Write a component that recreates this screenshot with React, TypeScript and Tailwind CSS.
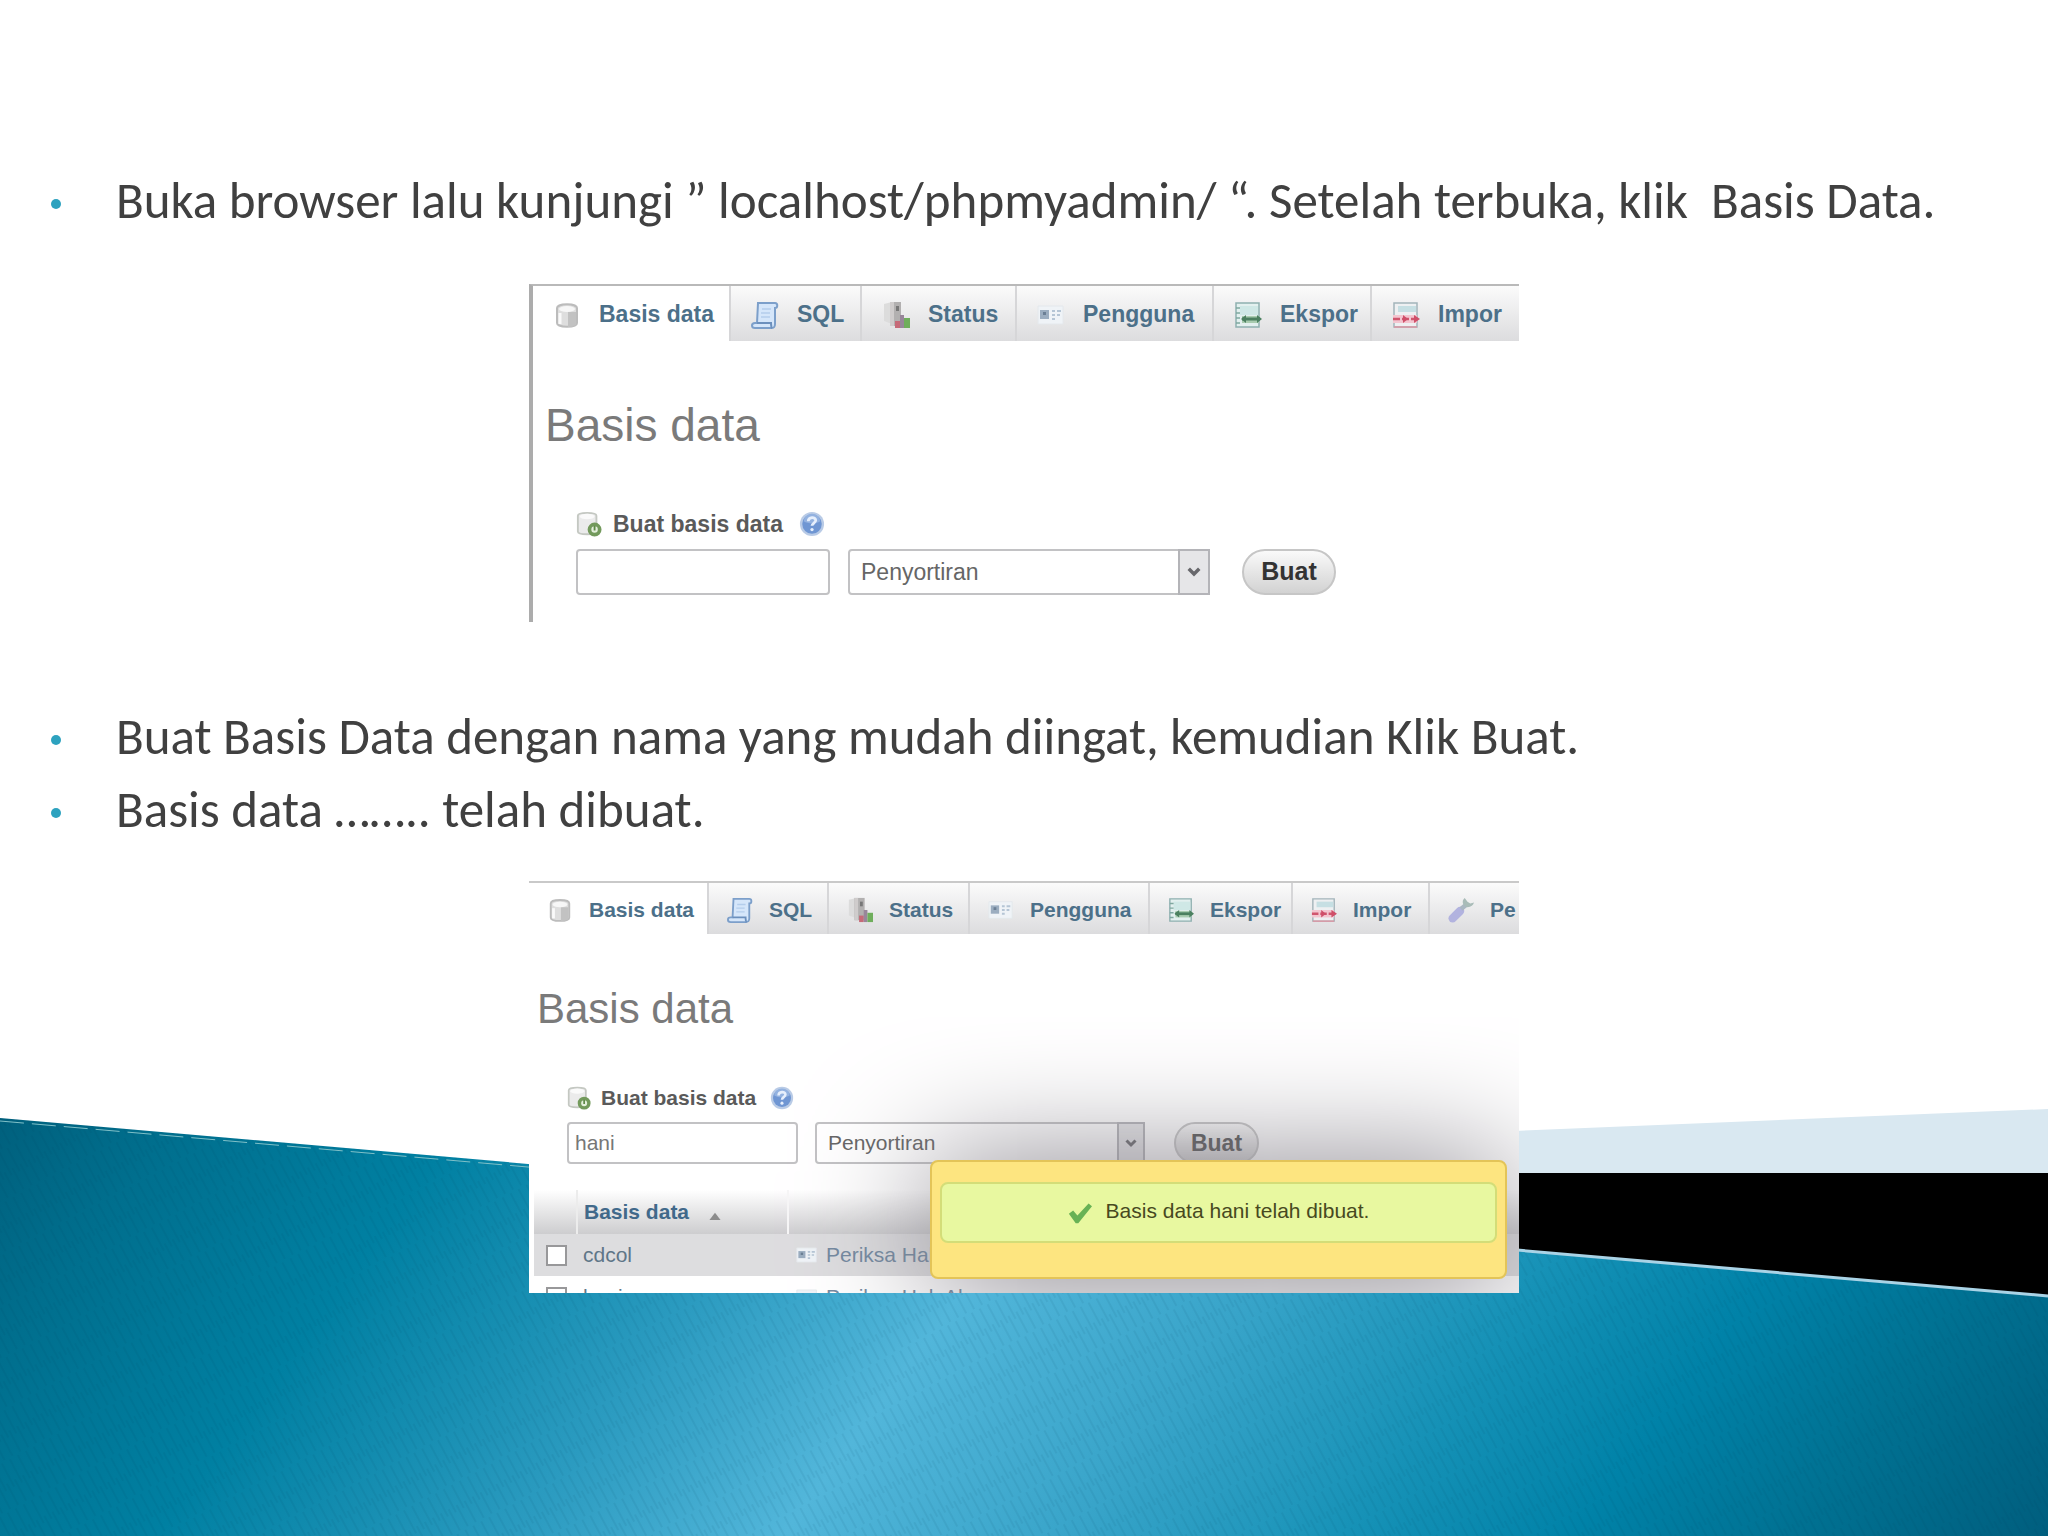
import React from "react";

type IconProps = { className?: string };

function DatabaseIcon({ className }: IconProps) {
  return (
    <svg viewBox="0 0 28 28" className={className} aria-hidden="true">
      <path d="M4 7c0-5 20-5 20 0v15c0 5-20 5-20 0z" fill="#dedede" stroke="#bcbcbc" strokeWidth="2" />
      <path d="M15 11h8v13c-2 1-5 2-8 2z" fill="#c2c2c2" />
      <ellipse cx="14" cy="8" rx="8" ry="3" fill="#f7f7f7" />
      <path d="M7 12v11" stroke="#fafafa" strokeWidth="3" />
    </svg>
  );
}

function SqlIcon({ className }: IconProps) {
  return (
    <svg viewBox="0 0 28 28" className={className} aria-hidden="true">
      <path
        d="M7 2h17c3 0 3 5 0 5v16c0 4-2 4-4 4H4c-4 0-4-5 0-5h2L7 2z"
        fill="#d5e6fa"
        stroke="#7c9fca"
        strokeWidth="2"
      />
      <path d="M6 22h14c0 3 1 5 0 5" fill="none" stroke="#6c90bd" strokeWidth="2" />
      <path d="M11 8h9M10 12h9M10 16h9" stroke="#b4cdec" strokeWidth="1.5" />
    </svg>
  );
}

function StatusIcon({ className }: IconProps) {
  return (
    <svg viewBox="0 0 28 28" className={className} aria-hidden="true">
      <path d="M2 3l8-2v22l-8-3z" fill="#dcdcdc" />
      <path d="M8 1h11v24H8z" fill="#b2b0b0" />
      <path d="M8 1h4v24H8z" fill="#cfcccc" />
      <path d="M14 5h3v5h-3z" fill="#777" />
      <path d="M13 20h5v7h-5z" fill="#c66a78" />
      <path d="M18 14h4v13h-4z" fill="#98869a" />
      <path d="M22 17h6v10h-6z" fill="#6fae5c" />
    </svg>
  );
}

function UsersIcon({ className }: IconProps) {
  return (
    <svg viewBox="0 0 28 28" className={className} aria-hidden="true">
      <path d="M1 5h25v18H1z" fill="#eff3f7" stroke="#e4e8ec" />
      <path d="M3 9h9v9H3z" fill="#9badc0" />
      <path d="M6 11h3v3H6z" fill="#6b7f95" />
      <path d="M15 10h3M20 10h4M15 14h3M20 14h3M15 18h3" stroke="#b5c5d5" strokeWidth="2" />
    </svg>
  );
}

function ExportIcon({ className }: IconProps) {
  return (
    <svg viewBox="0 0 28 28" className={className} aria-hidden="true">
      <path d="M2 2h23v24H2z" fill="#e3f0ef" stroke="#8fb0b0" strokeWidth="1.5" />
      <path d="M6 5h18v9H6z" fill="#cfe8e6" />
      <path d="M2 7h4M2 12h4M2 17h4M2 22h4" stroke="#7fa8a0" strokeWidth="1.5" />
      <path d="M8 15h17v7H8z" fill="#a9ccb0" />
      <path d="M8 18h18" stroke="#4b8060" strokeWidth="3" />
      <path d="M12 14l-5 4 5 4zM23 14l5 4-5 4z" fill="#4b8060" />
    </svg>
  );
}

function ImportIcon({ className }: IconProps) {
  return (
    <svg viewBox="0 0 28 28" className={className} aria-hidden="true">
      <path d="M2 2h23v24H2z" fill="#eef0f2" stroke="#a3b4ba" strokeWidth="1.5" />
      <path d="M6 5h18v6H6z" fill="#c6dfe3" />
      <path d="M1 14h24v8H1z" fill="#f3c6d0" />
      <path d="M1 18h26" stroke="#d0566e" strokeWidth="2.5" strokeDasharray="7 2" />
      <path d="M11 14l5 4-5 4zM22 14l6 4-6 4z" fill="#cf4f69" />
      <path d="M2 26h23" stroke="#dc94a2" strokeWidth="1.5" />
    </svg>
  );
}

function SettingsIcon({ className }: IconProps) {
  return (
    <svg viewBox="0 0 28 28" className={className} aria-hidden="true">
      <path d="M5 23L13 15" stroke="#b2b3df" strokeWidth="9" strokeLinecap="round" />
      <path d="M14 13l6-5" stroke="#aab7c2" strokeWidth="5" />
      <path d="M18 1c-4 3-2 9 3 10 4 0 6-2 7-5l-4 1-3-2z" fill="#a9bcb8" />
    </svg>
  );
}

function NewDatabaseIcon({ className }: IconProps) {
  return (
    <svg viewBox="0 0 28 28" className={className} aria-hidden="true">
      <path d="M2 5c0-4 20-4 20 0v17c0 4-20 4-20 0z" fill="#ebebeb" stroke="#c4c8c2" strokeWidth="2" />
      <ellipse cx="12" cy="6" rx="8" ry="3" fill="#fafafa" />
      <circle cx="20" cy="20" r="5.5" fill="#e4efdc" stroke="#739a5c" strokeWidth="4" />
      <path d="M20 16v5" stroke="#5f8a48" strokeWidth="2" />
    </svg>
  );
}

function HelpIcon({ className }: IconProps) {
  return (
    <svg viewBox="0 0 28 28" className={className} aria-hidden="true">
      <circle cx="14" cy="14" r="13" fill="#b9cbe6" />
      <circle cx="14" cy="14" r="10.5" fill="#6f96d3" />
      <path d="M5 11a9 8 0 0 1 18 0c-5 3-13 3-18 0z" fill="#93b2e0" />
      <path d="M10 11c0-5 8-5 8-1 0 3-4 3-4 6" fill="none" stroke="#e6effc" strokeWidth="3" />
      <circle cx="14" cy="20" r="1.8" fill="#e6effc" />
    </svg>
  );
}

function CheckIcon({ className }: IconProps) {
  return (
    <svg viewBox="0 0 28 28" className={className} aria-hidden="true">
      <path d="M1 15l5-4 5 6L24 3l4 3-16 20H9z" fill="#68b255" />
    </svg>
  );
}

type Tab = { label: string; Icon: (p: IconProps) => React.JSX.Element };

const tabs: Tab[] = [
  { label: "Basis data", Icon: DatabaseIcon },
  { label: "SQL", Icon: SqlIcon },
  { label: "Status", Icon: StatusIcon },
  { label: "Pengguna", Icon: UsersIcon },
  { label: "Ekspor", Icon: ExportIcon },
  { label: "Impor", Icon: ImportIcon },
];

function TabBar({ items, large }: { items: Tab[]; large: boolean }) {
  return (
    <nav
      className={
        large
          ? "grid h-[55px] grid-cols-[196px_131px_155px_197px_158px_1fr] text-[23px]"
          : "grid h-[51px] grid-cols-[178px_120px_141px_180px_143px_137px_1fr] text-[21px]"
      }
    >
      {items.map(({ label, Icon }, i) => (
        <a
          key={label}
          href="#"
          className={
            "flex items-center overflow-hidden pt-[2px] font-bold whitespace-nowrap text-[#4c7089] " +
            (large ? "gap-[18px] pl-5 " : "gap-4 pl-[18px] ") +
            (i === 0
              ? "bg-white"
              : "border-l-2 border-[#d6d6d8] bg-linear-to-b from-[#fbfbfb] to-[#dcdcde]")
          }
        >
          <Icon className={large ? "size-7 shrink-0" : "size-[26px] shrink-0"} />
          {label}
        </a>
      ))}
    </nav>
  );
}

function CreateForm({ id, large, value }: { id: string; large: boolean; value: string }) {
  return (
    <form className={large ? "mt-[57px] pl-[43px]" : "mt-[51px] pl-[38px]"} onSubmit={(e) => e.preventDefault()}>
      <div
        className={
          large
            ? "flex h-7 items-center text-[23px] font-bold text-[#5a5a5a]"
            : "flex h-[26px] items-center text-[21px] font-bold text-[#5a5a5a]"
        }
      >
        <NewDatabaseIcon className={large ? "size-[26px]" : "size-6"} />
        <label htmlFor={id} className={large ? "ml-[11px]" : "ml-[10px]"}>
          Buat basis data
        </label>
        <HelpIcon className={large ? "ml-4 size-[26px]" : "ml-[14px] size-6"} />
      </div>
      <div className={large ? "mt-[11px] flex h-[46px] text-[23px]" : "mt-[11px] flex h-[42px] text-[21px]"}>
        <input
          id={id}
          type="text"
          defaultValue={value}
          className={
            "rounded-sm border-2 border-[#c2c2c4] bg-white px-[6px] text-[#777] " +
            (large ? "w-[254px]" : "w-[231px]")
          }
        />
        <div className={large ? "relative ml-[18px] w-[362px]" : "relative ml-[17px] w-[330px]"}>
          <select
            aria-label="Penyortiran"
            className="size-full appearance-none rounded-sm border-2 border-[#c2c2c4] bg-white px-[11px] text-[#666]"
          >
            <option>Penyortiran</option>
          </select>
          <span
            className={
              "pointer-events-none absolute inset-y-0 right-0 flex items-center justify-center border-2 border-[#b4b4b8] bg-[#e6e6e8] " +
              (large ? "w-8" : "w-7")
            }
          >
            <svg viewBox="0 0 16 12" className={large ? "w-[14px]" : "w-3"} aria-hidden="true">
              <path d="M2 2l6 6 6-6" fill="none" stroke="#68686c" strokeWidth="4" />
            </svg>
          </span>
        </div>
        <button
          type="submit"
          className={
            "rounded-full border-2 border-[#c6c6c6] bg-linear-to-b from-[#fafafa] to-[#d2d2d2] font-bold " +
            (large ? "ml-8 w-[94px] text-[25px] text-[#333]" : "ml-[29px] w-[85px] text-[23px] text-[#555]")
          }
        >
          Buat
        </button>
      </div>
    </form>
  );
}

function DatabaseTable() {
  return (
    <table className="mt-[26px] ml-[5px] w-full table-fixed border-collapse text-left text-[21px]">
      <colgroup>
        <col className="w-[43px]" />
        <col className="w-[211px]" />
        <col />
      </colgroup>
      <thead>
        <tr className="h-11 bg-linear-to-b from-white to-[#cdcdcf]">
          <th className="border-r-2 border-[#ececec]" />
          <th className="border-r-2 border-[#f6f6f6] pl-[6px] font-bold text-[#41698a]">
            <span className="flex items-center gap-5">
              Basis data
              <svg viewBox="0 0 14 10" className="mt-2 w-3" aria-hidden="true">
                <path d="M0 10l7-9 7 9z" fill="#8c8c8c" />
              </svg>
            </span>
          </th>
          <th />
        </tr>
      </thead>
      <tbody>
        {["cdcol", "hani"].map((name, i) => (
          <tr key={name} className={i === 0 ? "h-[42px] bg-[#dddddf]" : "h-[42px] bg-white"}>
            <td className="pl-3">
              <input
                type="checkbox"
                aria-label={name}
                className="block size-[21px] appearance-none border-2 border-[#98989a] bg-white"
              />
            </td>
            <td className="pl-[6px] text-[#5f7688]">{name}</td>
            <td className="pl-2">
              <a href="#" className="flex items-center gap-2 text-[#7389a0]">
                <UsersIcon className="size-[22px]" />
                Periksa Hak Akses
              </a>
            </td>
          </tr>
        ))}
      </tbody>
    </table>
  );
}

function Notice() {
  return (
    <div
      role="status"
      className="absolute right-3 bottom-[14px] h-[119px] w-[577px] rounded-lg border-2 border-[#e3c458] bg-[#fde580] px-2 pt-5 shadow-[0_5px_130px_#817d86]"
    >
      <p className="flex h-[61px] items-center justify-center gap-[14px] rounded-lg border-2 border-[#d3dd78] bg-[#e8f8a0] pb-1 text-[21px] text-[#47491f]">
        <CheckIcon className="mt-1 size-6" />
        Basis data hani telah dibuat.
      </p>
    </div>
  );
}

function Backdrop() {
  return (
    <svg
      viewBox="0 0 2048 436"
      preserveAspectRatio="none"
      className="absolute inset-x-0 bottom-0 h-[436px] w-full"
      aria-hidden="true"
    >
      <defs>
        <linearGradient id="teal" gradientUnits="userSpaceOnUse" x1="0" y1="0" x2="1551" y2="1148">
          <stop offset="0" stopColor="#005f7c" />
          <stop offset="0.08" stopColor="#006f8e" />
          <stop offset="0.2" stopColor="#0080a2" />
          <stop offset="0.35" stopColor="#2b9bc0" />
          <stop offset="0.46" stopColor="#52b6da" />
          <stop offset="0.58" stopColor="#38a4c9" />
          <stop offset="0.7" stopColor="#1591b6" />
          <stop offset="0.79" stopColor="#0082a8" />
          <stop offset="0.88" stopColor="#007192" />
          <stop offset="1" stopColor="#005c7c" />
        </linearGradient>
        <pattern id="weave" width="9" height="46" patternUnits="userSpaceOnUse" patternTransform="rotate(-28)">
          <path d="M2 0v26M6 20v24" stroke="#003c5a" strokeOpacity="0.07" strokeWidth="2" />
        </pattern>
      </defs>
      <path d="M1100 48L2048 9v64H1100z" fill="#d9e8f1" />
      <path d="M1100 73h948v123L1100 114z" fill="#000" />
      <path d="M0 18L2048 196v240H0z" fill="url(#teal)" />
      <path d="M0 18L2048 196v240H0z" fill="url(#weave)" />
      <path d="M0 21L700 82" stroke="#7fc0c8" strokeWidth="1" strokeDasharray="24 8" />
      <path d="M1100 114L2048 196" stroke="#a9d3e6" strokeWidth="3" />
    </svg>
  );
}

function Bullet({ children }: { children: React.ReactNode }) {
  return (
    <li className="flex items-start">
      <span className="mt-[35px] mr-[55px] ml-[51px] size-[10px] shrink-0 rounded-full bg-[#2da2bf]" />
      <span className="whitespace-pre-wrap">{children}</span>
    </li>
  );
}

export default function App() {
  return (
    <main className="relative min-h-screen overflow-hidden bg-white pt-[164px] font-['Liberation_Sans',Arial,sans-serif]">
      <Backdrop />
      <div className="relative">
        <ul className="font-[Carlito,Lato,sans-serif] text-[51px] leading-[73px] text-[#404040]">
          <Bullet>{"Buka browser lalu kunjungi ” localhost/phpmyadmin/ “. Setelah terbuka, klik  Basis Data."}</Bullet>
        </ul>

        <section className="mx-auto mt-[47px] max-w-[990px] overflow-hidden border-t-2 border-l-4 border-t-[#b9b9b9] border-l-[#acacac] bg-white pb-[27px]">
          <TabBar items={tabs} large />
          <h2 className="mt-14 pl-3 text-[46px] leading-[56px] text-[#7a7a7a]">Basis data</h2>
          <CreateForm id="db-name-empty" large value="" />
        </section>

        <ul className="mt-[78px] font-[Carlito,Lato,sans-serif] text-[51px] leading-[73px] text-[#404040]">
          <Bullet>Buat Basis Data dengan nama yang mudah diingat, kemudian Klik Buat.</Bullet>
          <Bullet>Basis data …….. telah dibuat.</Bullet>
        </ul>

        <section className="relative mx-auto mt-[35px] h-[412px] max-w-[990px] overflow-hidden border-t-2 border-[#c9c9c9] bg-white">
          <TabBar items={[...tabs, { label: "Pe", Icon: SettingsIcon }]} large={false} />
          <h2 className="mt-[50px] pl-2 text-[42px] leading-[50px] text-[#7a7a7a]">Basis data</h2>
          <CreateForm id="db-name-filled" large={false} value="hani" />
          <DatabaseTable />
          <Notice />
        </section>
      </div>
    </main>
  );
}
